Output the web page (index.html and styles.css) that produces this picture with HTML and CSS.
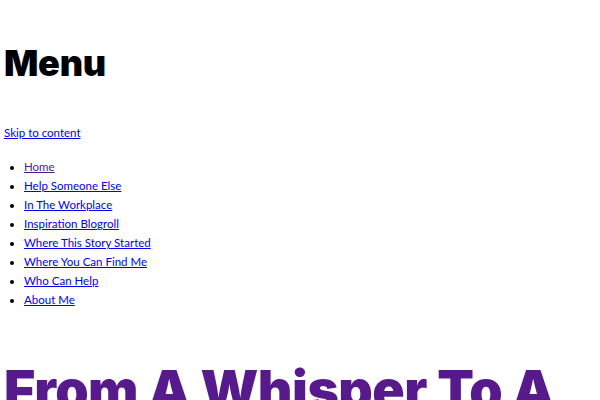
FILE: index.html
```html
<!DOCTYPE html>
<html>
<head>
<meta charset="utf-8">
<link rel="stylesheet" href="styles.css">
</head>
<body>
<h2 class="menu-title">Menu</h2>
<a class="skip" href="#content">Skip to content</a>
<ul class="nav">
<li><a class="visited" href="#">Home</a></li>
<li><a href="#">Help Someone Else</a></li>
<li><a href="#">In The Workplace</a></li>
<li><a href="#">Inspiration Blogroll</a></li>
<li><a href="#">Where This Story Started</a></li>
<li><a href="#">Where You Can Find Me</a></li>
<li><a href="#">Who Can Help</a></li>
<li><a href="#">About Me</a></li>
</ul>
<h1 class="site-title" id="content">From A Whisper To A Roar</h1>
</body>
</html>
```
FILE: styles.css
```css
html, body { margin: 0; padding: 0; background: #fff; }
body { padding: 0 4px; font-family: Lato, "Noto Sans", sans-serif; font-size: 11.5px; color: #000; overflow: hidden; }
a { color: #0000ee; }
a.visited { color: #551a8b; }
.menu-title { font-family: Inter, Lato, sans-serif; font-weight: 900; font-size: 36px; margin: 39px 0 36px; line-height: 48px; letter-spacing: -0.3px; }
.skip { display: inline-block; line-height: 19px; vertical-align: top; }
.nav { margin: 15px 0 0; padding-left: 20px; list-style: disc; }
.nav li { line-height: 19px; height: 19px; }
.site-title { font-family: Inter, Lato, sans-serif; font-weight: 900; font-size: 53.5px; color: #561a8c; margin: 49px 0 0; line-height: 64px; letter-spacing: -0.5px; }
```
